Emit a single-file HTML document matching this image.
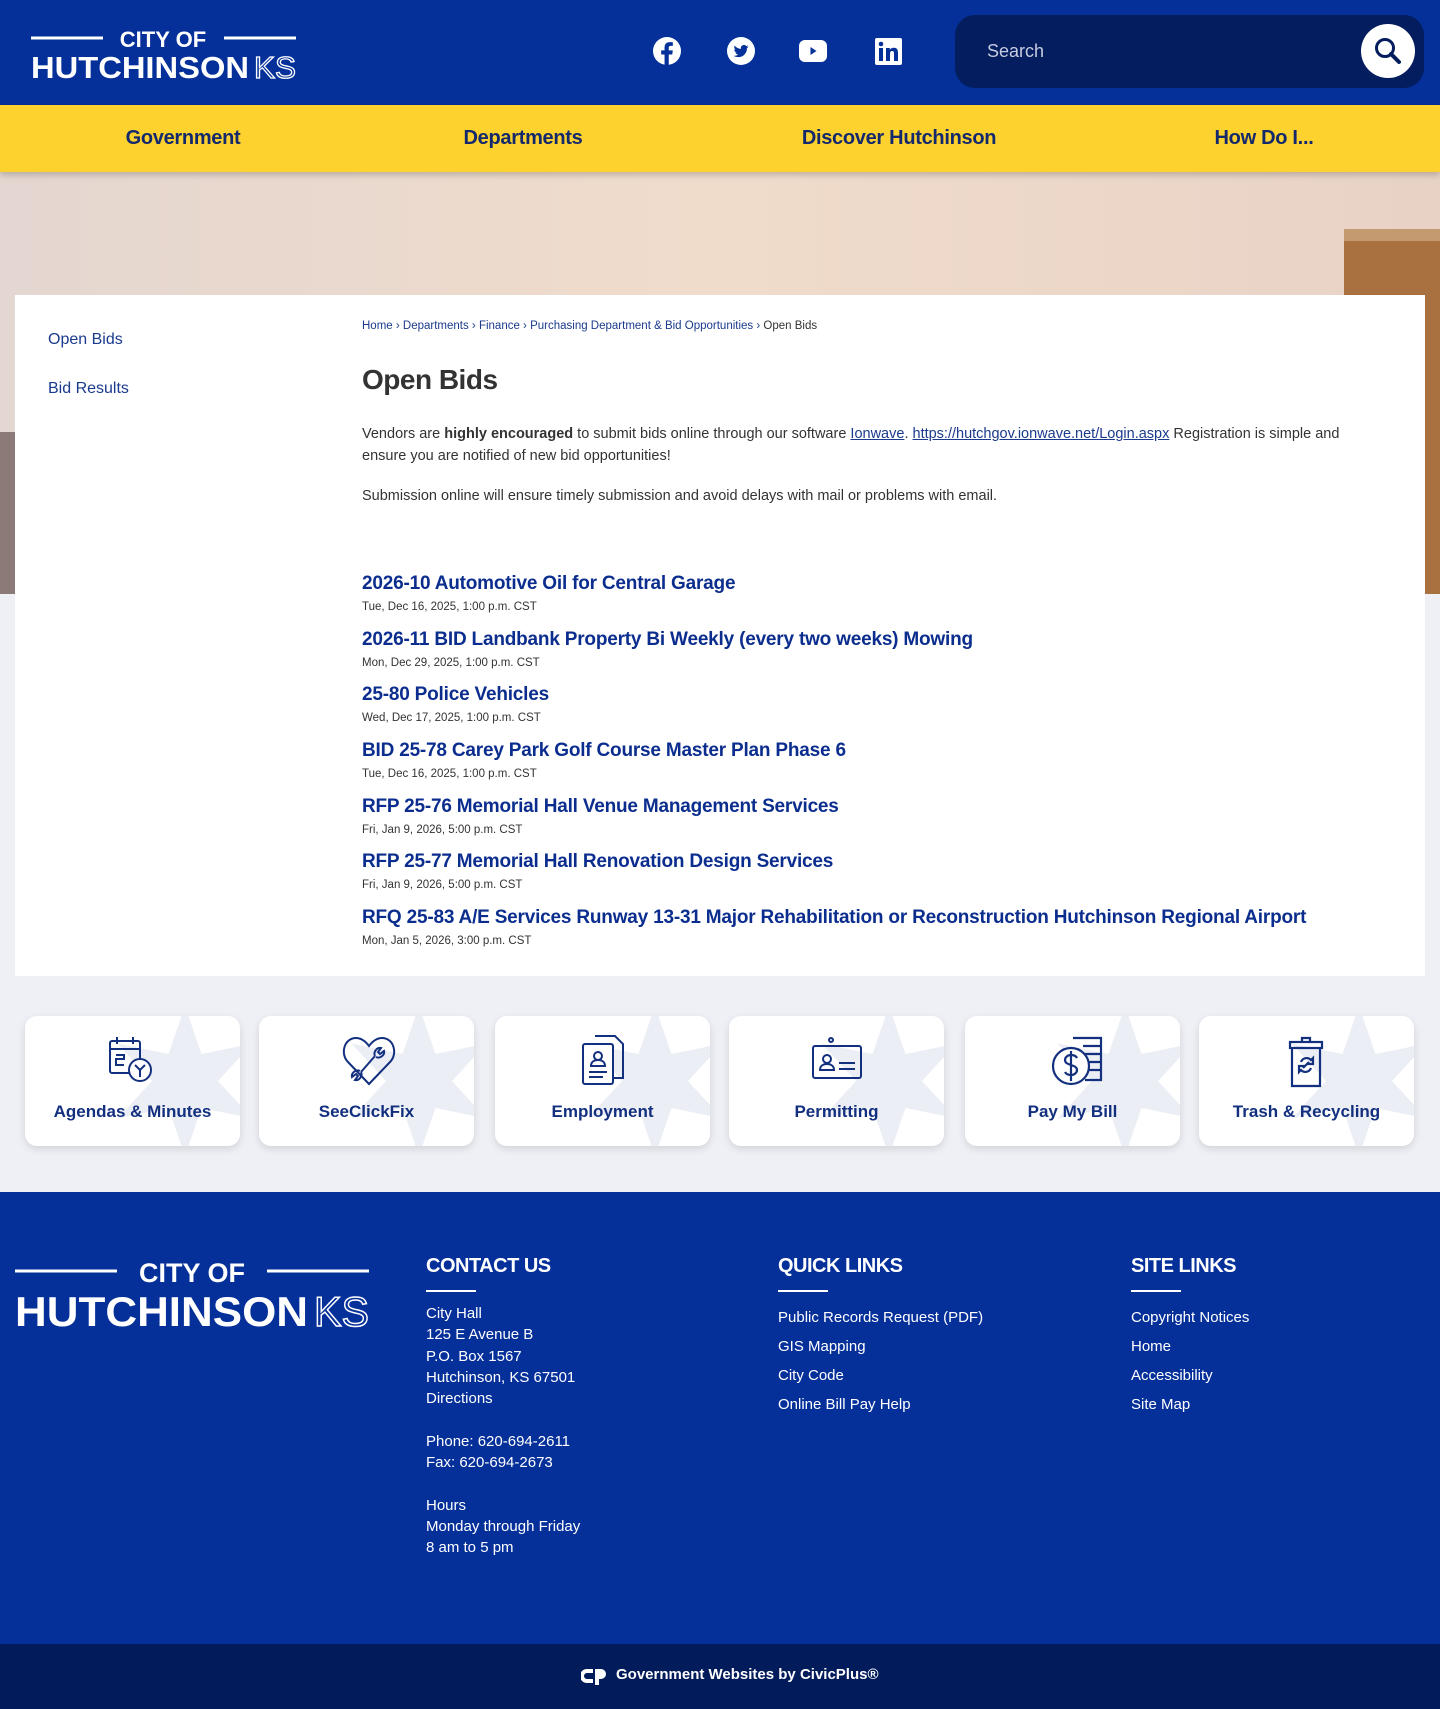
<!DOCTYPE html>
<html><head><meta charset="utf-8"><style>
*{box-sizing:border-box;margin:0;padding:0}
body{width:1440px;height:1709px;overflow:hidden;font-family:"Liberation Sans",sans-serif;background:#eef0f6;position:relative;color:#333}
.abs{position:absolute}
#hdr{left:0;top:0;width:1440px;height:105px;background:#05309a}
#nav{left:0;top:105px;width:1440px;height:67px;background:#fdd22f;box-shadow:0 3px 6px rgba(0,0,0,.2);z-index:2}
#nav span{position:absolute;top:22px;font-size:20px;font-weight:bold;color:#13296b;transform:translateX(-50%);letter-spacing:-.3px}
#hero{left:0;top:172px;width:1440px;height:422px;background:linear-gradient(90deg,#e4d6d0,#f0dccb 50%,#e8d2c6)}
#panel{left:15px;top:295px;width:1410px;height:681px;background:#fff}
.side{left:48px;font-size:16px;color:#1a3a8c}
.bt{left:362px;font-size:19px;font-weight:bold;color:#0b2d8e;letter-spacing:-.2px}
.bd{left:362px;font-size:11.5px;color:#333}
.card{top:1016px;width:215px;height:130px;background:#fff;border-radius:12px;box-shadow:0 3px 8px rgba(0,0,0,.12);overflow:hidden}
.card .lbl{position:absolute;top:86px;width:100%;text-align:center;font-size:17px;font-weight:bold;color:#13307f}
.card svg.ic{position:absolute;left:82px;top:18px}
#foot{left:0;top:1192px;width:1440px;height:452px;background:#05309a;color:#fff}
#bar{left:0;top:1644px;width:1440px;height:65px;background:#021b5a;color:#fff}
.fh{font-size:20px;font-weight:bold;top:1255px;color:#fff;letter-spacing:-.5px}
.ful{top:1290px;width:50px;height:2px;background:#fff}
.fl{font-size:15px;color:#fff;line-height:21.3px}
</style></head><body>
<div id="hdr" class="abs">
 <svg class="abs" style="left:31px;top:26px" width="265" height="54" viewBox="0 0 265 54">
  <line x1="0" y1="12" x2="72" y2="12" stroke="#fff" stroke-width="3"/>
  <line x1="193" y1="12" x2="265" y2="12" stroke="#fff" stroke-width="3"/>
  <text x="132" y="21" text-anchor="middle" fill="#fff" font-family="Liberation Sans" font-weight="bold" font-size="22">CITY OF</text>
  <text x="0" y="52" fill="#fff" font-family="Liberation Sans" font-weight="bold" font-size="31" textLength="218" lengthAdjust="spacingAndGlyphs">HUTCHINSON</text>
  <text x="223" y="52" fill="none" stroke="#fff" stroke-width="1.3" font-family="Liberation Sans" font-size="31" textLength="42" lengthAdjust="spacingAndGlyphs">KS</text>
 </svg>
 <svg class="abs" style="left:653px;top:37px" width="28" height="28" viewBox="0 0 24 24"><circle cx="12" cy="12" r="12" fill="#fff"/><path d="M13.5 24V15h3l.5-3.5h-3.5V9.3c0-1 .3-1.7 1.8-1.7H17V4.5c-.3 0-1.4-.1-2.7-.1-2.6 0-4.4 1.6-4.4 4.5v2.6H7V15h2.9v9z" fill="#05309a"/></svg>
 <svg class="abs" style="left:727px;top:37px" width="28" height="28" viewBox="0 0 24 24"><circle cx="12" cy="12" r="12" fill="#fff"/><path d="M18.5 8.2c-.5.2-1 .4-1.5.4.6-.3 1-.9 1.2-1.5-.5.3-1.1.5-1.7.7a2.6 2.6 0 0 0-4.5 2.4c-2.2-.1-4.1-1.2-5.4-2.8-.7 1.2-.3 2.7.8 3.5-.4 0-.8-.1-1.2-.3 0 1.300.9 2.4 2.100 2.600-.4.100-.8.100-1.200 0 .3 1 1.300 1.800 2.400 1.800-1.100.9-2.500 1.300-3.900 1.100 1.200.8 2.600 1.200 4 1.200 4.900 0 7.600-4.100 7.500-7.800.5-.4 1-.8 1.400-1.300z" fill="#05309a"/></svg>
 <svg class="abs" style="left:799px;top:40px" width="28" height="22" viewBox="0 0 28 22"><rect width="28" height="22" rx="6" fill="#fff"/><path d="M11.5 7l6 4-6 4z" fill="#05309a"/></svg>
 <svg class="abs" style="left:875px;top:38px" width="27" height="27" viewBox="0 0 27 27"><rect width="27" height="27" rx="2" fill="#fff"/><rect x="4" y="10" width="4" height="13" fill="#05309a"/><circle cx="6" cy="6" r="2.3" fill="#05309a"/><path d="M11 10h3.8v1.8c.6-1.1 2-2.1 4-2.1 3.5 0 4.2 2.3 4.2 5.3V23h-4v-7c0-1.6-.1-3-1.8-3s-2.2 1.3-2.2 3V23h-4z" fill="#05309a"/></svg>
 <div class="abs" style="left:955px;top:15px;width:469px;height:73px;background:#041d5e;border-radius:20px"></div>
 <div class="abs" style="left:987px;top:41px;font-size:18px;color:#c6cce0">Search</div>
 <div class="abs" style="left:1361px;top:24px;width:54px;height:54px;border-radius:50%;background:#fff"></div>
 <svg class="abs" style="left:1373px;top:36px" width="30" height="30" viewBox="0 0 30 30"><circle cx="12" cy="12" r="8.5" fill="none" stroke="#041d5e" stroke-width="3"/><line x1="18" y1="18" x2="26" y2="26" stroke="#041d5e" stroke-width="4" stroke-linecap="round"/></svg>
</div>
<div id="nav" class="abs"><span style="left:183px">Government</span><span style="left:523px">Departments</span><span style="left:899px">Discover Hutchinson</span><span style="left:1264px">How Do I...</span></div>
<div id="hero" class="abs">
 <div class="abs" style="left:1344px;top:57px;width:96px;height:365px;background:#a8713f"></div>
 <div class="abs" style="left:1344px;top:57px;width:96px;height:12px;background:#c49a70"></div>
 <div class="abs" style="left:0;top:260px;width:15px;height:162px;background:#8c7a78"></div>
</div>
<div id="panel" class="abs"></div>
<div class="abs side" style="top:331px">Open Bids</div>
<div class="abs side" style="top:380px">Bid Results</div>
<div class="abs" style="left:362px;top:320px;font-size:11.5px;color:#1a3a8c">Home › Departments › Finance › Purchasing Department &amp; Bid Opportunities › <span style="color:#333">Open Bids</span></div>
<div class="abs" style="left:362px;top:364px;font-size:28px;font-weight:bold;color:#333;letter-spacing:-.5px">Open Bids</div>
<div class="abs" style="left:362px;top:424px;width:1020px;font-size:14.5px;line-height:21.5px;color:#333">Vendors are <b>highly encouraged</b> to submit bids online through our software <u style="color:#1a3a8c">Ionwave</u>. <u style="color:#1a3a8c">https://hutchgov.ionwave.net/Login.aspx</u> Registration is simple and ensure you are notified of new bid opportunities!</div>
<div class="abs" style="left:362px;top:488px;font-size:14.5px;color:#333">Submission online will ensure timely submission and avoid delays with mail or problems with email.</div>
<div class="abs bt" style="top:573px">2026-10 Automotive Oil for Central Garage</div><div class="abs bd" style="top:601px">Tue, Dec 16, 2025, 1:00 p.m. CST</div>
<div class="abs bt" style="top:629px">2026-11 BID Landbank Property Bi Weekly (every two weeks) Mowing</div><div class="abs bd" style="top:657px">Mon, Dec 29, 2025, 1:00 p.m. CST</div>
<div class="abs bt" style="top:684px">25-80 Police Vehicles</div><div class="abs bd" style="top:712px">Wed, Dec 17, 2025, 1:00 p.m. CST</div>
<div class="abs bt" style="top:740px">BID 25-78 Carey Park Golf Course Master Plan Phase 6</div><div class="abs bd" style="top:768px">Tue, Dec 16, 2025, 1:00 p.m. CST</div>
<div class="abs bt" style="top:796px">RFP 25-76 Memorial Hall Venue Management Services</div><div class="abs bd" style="top:824px">Fri, Jan 9, 2026, 5:00 p.m. CST</div>
<div class="abs bt" style="top:851px">RFP 25-77 Memorial Hall Renovation Design Services</div><div class="abs bd" style="top:879px">Fri, Jan 9, 2026, 5:00 p.m. CST</div>
<div class="abs bt" style="top:907px">RFQ 25-83 A/E Services Runway 13-31 Major Rehabilitation or Reconstruction Hutchinson Regional Airport</div><div class="abs bd" style="top:935px">Mon, Jan 5, 2026, 3:00 p.m. CST</div>

<div class="abs card" style="left:25px"><svg class="abs" style="left:85px;top:-10px" width="150" height="150" viewBox="0 0 100 100"><polygon points="50,0 61,32 95,25 72,50 95,75 61,68 50,100 39,68 5,75 28,50 5,25 39,32" fill="#eceef6"/></svg>
 <svg class="ic" width="50" height="50" viewBox="0 0 50 50" fill="none" stroke="#13307f" stroke-width="2"><rect x="3" y="7" width="30" height="32" rx="2"/><line x1="3" y1="15" x2="33" y2="15"/><line x1="10" y1="3" x2="10" y2="10"/><line x1="26" y1="3" x2="26" y2="10"/><circle cx="33" cy="36" r="11" fill="#fff"/><path d="M28 31l5 5 5-5M33 36v7"/><path d="M9 21h8v4H9v6h8"/></svg><div class="lbl">Agendas &amp; Minutes</div></div>
<div class="abs card" style="left:259px"><svg class="abs" style="left:85px;top:-10px" width="150" height="150" viewBox="0 0 100 100"><polygon points="50,0 61,32 95,25 72,50 95,75 61,68 50,100 39,68 5,75 28,50 5,25 39,32" fill="#eceef6"/></svg>
 <svg class="ic" width="56" height="52" viewBox="0 0 56 52" fill="none" stroke="#13307f" stroke-width="2"><path d="M28 50L7 28C-1 20 3 4 15 4c6 0 10 4 13 8 3-4 7-8 13-8 12 0 16 16 8 24z"/><path d="M20 38l14-16M34 22c-2-4 2-9 6-8l-3 4 2 2 4-3c1 4-4 8-8 6M20 38c2 4-2 9-6 8l3-4-2-2-4 3c-1-4 4-8 8-6"/></svg><div class="lbl">SeeClickFix</div></div>
<div class="abs card" style="left:495px"><svg class="abs" style="left:85px;top:-10px" width="150" height="150" viewBox="0 0 100 100"><polygon points="50,0 61,32 95,25 72,50 95,75 61,68 50,100 39,68 5,75 28,50 5,25 39,32" fill="#eceef6"/></svg>
 <svg class="ic" width="50" height="52" viewBox="0 0 50 52" fill="none" stroke="#13307f" stroke-width="2"><path d="M18 2h20l8 8v34H36"/><rect x="6" y="10" width="30" height="40" rx="2" fill="#fff"/><circle cx="21" cy="22" r="4"/><path d="M14 32c0-4 3-6 7-6s7 2 7 6z"/><line x1="12" y1="38" x2="30" y2="38"/><line x1="12" y1="43" x2="26" y2="43"/></svg><div class="lbl">Employment</div></div>
<div class="abs card" style="left:729px"><svg class="abs" style="left:85px;top:-10px" width="150" height="150" viewBox="0 0 100 100"><polygon points="50,0 61,32 95,25 72,50 95,75 61,68 50,100 39,68 5,75 28,50 5,25 39,32" fill="#eceef6"/></svg>
 <svg class="ic" width="52" height="50" viewBox="0 0 52 50" fill="none" stroke="#13307f" stroke-width="2"><rect x="2" y="12" width="48" height="32" rx="2"/><circle cx="16" cy="25" r="4"/><path d="M9 36c0-4 3-6 7-6s7 2 7 6z"/><line x1="28" y1="29" x2="44" y2="29"/><line x1="28" y1="35" x2="44" y2="35"/><circle cx="20" cy="6" r="2"/></svg><div class="lbl">Permitting</div></div>
<div class="abs card" style="left:965px"><svg class="abs" style="left:85px;top:-10px" width="150" height="150" viewBox="0 0 100 100"><polygon points="50,0 61,32 95,25 72,50 95,75 61,68 50,100 39,68 5,75 28,50 5,25 39,32" fill="#eceef6"/></svg>
 <svg class="ic" width="60" height="54" viewBox="0 0 60 54" fill="none" stroke="#13307f" stroke-width="2.2"><path d="M26 4h28v42H38M36 12h18M38 20h16M40 28h14M40 36h14"/><circle cx="24" cy="32" r="18" fill="#fff"/><path d="M30 24c-1-2-3-3-6-3s-6 2-6 5 3 4 6 5 6 2 6 5-3 5-6 5-5-1-6-3M24 17v30"/></svg><div class="lbl">Pay My Bill</div></div>
<div class="abs card" style="left:1199px"><svg class="abs" style="left:85px;top:-10px" width="150" height="150" viewBox="0 0 100 100"><polygon points="50,0 61,32 95,25 72,50 95,75 61,68 50,100 39,68 5,75 28,50 5,25 39,32" fill="#eceef6"/></svg>
 <svg class="ic" width="50" height="54" viewBox="0 0 50 54" fill="none" stroke="#13307f" stroke-width="2.2"><rect x="9" y="8" width="32" height="6"/><path d="M21 8V4h8v4M11 14v38h28V14"/><path d="M20 28a6 6 0 0 1 10-2l2-2v6h-6l2-2M30 34a6 6 0 0 1-10 2l-2 2v-6h6l-2 2"/></svg><div class="lbl">Trash &amp; Recycling</div></div>

<div id="foot" class="abs"></div>
<svg class="abs" style="left:15px;top:1258px" width="354" height="70" viewBox="0 0 354 70">
 <line x1="0" y1="13" x2="102" y2="13" stroke="#fff" stroke-width="3"/><line x1="252" y1="13" x2="354" y2="13" stroke="#fff" stroke-width="3"/>
 <text x="177" y="24" text-anchor="middle" fill="#fff" font-family="Liberation Sans" font-weight="bold" font-size="27">CITY OF</text>
 <text x="0" y="68" fill="#fff" font-family="Liberation Sans" font-weight="bold" font-size="42" textLength="293" lengthAdjust="spacingAndGlyphs">HUTCHINSON</text>
 <text x="299" y="68" fill="none" stroke="#fff" stroke-width="1.5" font-family="Liberation Sans" font-size="42" textLength="55" lengthAdjust="spacingAndGlyphs">KS</text>
</svg>
<div class="abs fh" style="left:426px">CONTACT US</div><div class="abs ful" style="left:426px"></div>
<div class="abs fh" style="left:778px">QUICK LINKS</div><div class="abs ful" style="left:778px"></div>
<div class="abs fh" style="left:1131px">SITE LINKS</div><div class="abs ful" style="left:1131px"></div>
<div class="abs fl" style="left:426px;top:1303px">City Hall<br>125 E Avenue B<br>P.O. Box 1567<br>Hutchinson, KS 67501<br>Directions<br><br>Phone: 620-694-2611<br>Fax: 620-694-2673<br><br>Hours<br>Monday through Friday<br>8 am to 5 pm</div>
<div class="abs fl" style="left:778px;top:1303px;line-height:29px">Public Records Request (PDF)<br>GIS Mapping<br>City Code<br>Online Bill Pay Help</div>
<div class="abs fl" style="left:1131px;top:1303px;line-height:29px">Copyright Notices<br>Home<br>Accessibility<br>Site Map</div>
<div id="bar" class="abs"></div>
<div class="abs" style="left:581px;top:1667px;width:26px;height:18px;"><svg width="26" height="18" viewBox="0 0 26 18"><path d="M12 2H6a7 7 0 0 0 0 14h6v-4H6a3 3 0 0 1 0-6h6zM14 2h6a5 5 0 0 1 0 10h-2v6h-4z" fill="#fff"/></svg></div>
<div class="abs" style="left:616px;top:1666px;font-size:15px;font-weight:bold;color:#fff">Government Websites by CivicPlus®</div>
</body></html>
